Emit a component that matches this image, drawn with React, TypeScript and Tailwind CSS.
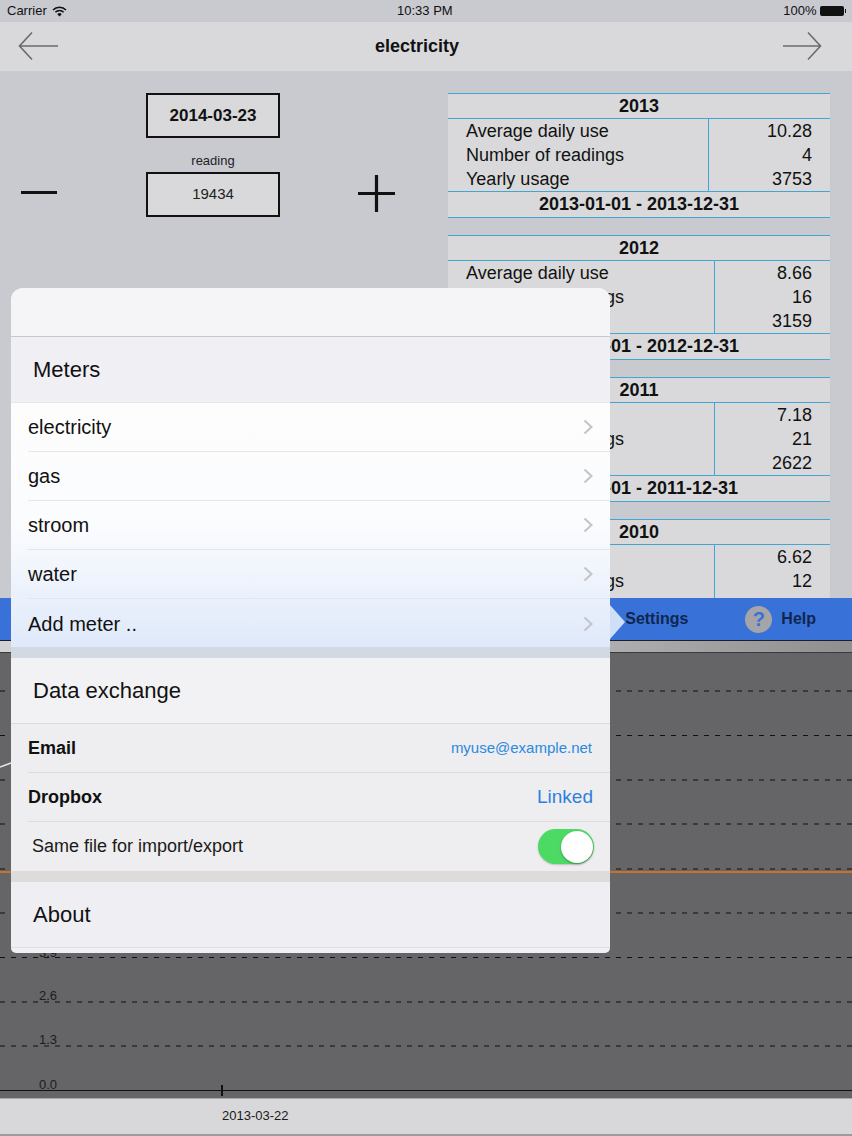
import React from "react";

const gridYs = [692, 736.5, 781, 825, 870, 914, 958.5, 1003, 1047];

function StatsTable({ year, range, divider, rows }: { year: string; range: string; divider: string; rows: [string, string][] }) {
  return (
    <div className="shrink-0 bg-[#d9d9db] text-[18px] leading-[24px] text-[#111] border-t border-b border-[#45a5d2]">
      <div className="h-[25px] text-center font-bold border-b border-[#45a5d2]">{year}</div>
      <div className="flex h-[73px] border-b border-[#45a5d2]">
        <div className={`${divider} shrink-0 pl-[18px] border-r border-[#45a5d2]`}>
          {rows.map((r) => (
            <div key={r[0]} className="whitespace-nowrap">{r[0]}</div>
          ))}
        </div>
        <div className="flex-1 pr-[18px] text-right">
          {rows.map((r) => (
            <div key={r[0]}>{r[1]}</div>
          ))}
        </div>
      </div>
      <div className="h-[25px] text-center font-bold">{range}</div>
    </div>
  );
}

function Chevron() {
  return (
    <svg width="11" height="16" viewBox="0 0 11 16" className="shrink-0">
      <path d="M1.5 1.5 L8.5 8 L1.5 14.5" fill="none" stroke="#c4c4c8" strokeWidth="2" />
    </svg>
  );
}

function MeterRow({ label, last }: { label: string; last?: boolean }) {
  return (
    <div className="h-[49px] pl-[17px]">
      <div className={`h-full flex items-center justify-between pr-[16px] ${last ? "" : "border-b border-[#e4e6ea]"}`}>
        <span className="text-[20px] text-[#111]">{label}</span>
        <Chevron />
      </div>
    </div>
  );
}

export default function App() {
  return (
    <div className="relative w-[852px] h-[1136px] overflow-hidden bg-[#c9c9d0] font-['Liberation_Sans',Arial,sans-serif] flex flex-col">
      {/* Status bar */}
      <div className="relative h-[22px] shrink-0 flex items-center justify-between pl-[7px] pr-[6px] text-[13px] text-[#111]">
        <div className="flex items-center gap-[5px]">
          <span>Carrier</span>
          <svg width="15" height="11" viewBox="0 0 15 11">
            <path d="M1 4 A9 9 0 0 1 14 4" fill="none" stroke="#111" strokeWidth="1.6" />
            <path d="M3.4 6.3 A5.6 5.6 0 0 1 11.6 6.3" fill="none" stroke="#111" strokeWidth="1.6" />
            <path d="M5.3 8.2 A3 3 0 0 1 9.7 8.2 L7.5 10.6 Z" fill="#111" />
          </svg>
        </div>
        <span className="absolute left-[397px] font-medium">10:33 PM</span>
        <div className="flex items-center gap-[3px]">
          <span>100%</span>
          <div className="w-[24px] h-[10px] bg-[#111] rounded-[2px]" />
          <div className="w-[1.5px] h-[4px] bg-[#111] -ml-[2px]" />
        </div>
      </div>

      {/* Nav bar */}
      <div className="h-[49px] shrink-0 bg-[#d9d9db] flex items-center justify-between pl-[18px] pr-[30px]">
        <svg width="42" height="30" viewBox="0 0 42 30" className="-mt-[2px]">
          <path d="M14 1.5 L1.5 15 L14 28.5 M1.5 15 H40" fill="none" stroke="#6b6b6b" strokeWidth="1.6" />
        </svg>
        <span className="text-[18px] font-bold text-[#111] -ml-[8px]">electricity</span>
        <svg width="40" height="30" viewBox="0 0 40 30" className="-mt-[2px]">
          <path d="M26 1.5 L38.5 15 L26 28.5 M38.5 15 H1" fill="none" stroke="#6b6b6b" strokeWidth="1.6" />
        </svg>
      </div>

      {/* Main content */}
      <div className="h-[527px] shrink-0 flex">
        <div className="w-[448px] shrink-0 flex items-start">
          <div className="w-[21px] shrink-0" />
          <div className="w-[36px] h-[3px] bg-[#111] mt-[120px] shrink-0" />
          <div className="w-[89px] shrink-0" />
          <div className="w-[134px] shrink-0 flex flex-col items-center mt-[22px]">
            <div className="w-full h-[45px] border-2 border-[#111] bg-[#d9d9db] flex items-center justify-center text-[17px] font-bold text-[#111]">
              2014-03-23
            </div>
            <div className="h-[34px] pt-[15px] text-[13px] leading-[16px] text-[#222]">reading</div>
            <div className="w-full h-[45px] border-2 border-[#111] bg-[#d9d9db] flex items-center justify-center text-[15px] text-[#222]">
              19434
            </div>
          </div>
          <div className="w-[78px] shrink-0" />
          <svg width="37" height="37" viewBox="0 0 37 37" className="mt-[104px] shrink-0">
            <path d="M18.5 0 V37 M0 18.5 H37" stroke="#111" strokeWidth="3.2" />
          </svg>
        </div>
        <div className="w-[382px] shrink-0 h-[505px] mt-[22px] overflow-hidden flex flex-col gap-[17px]">
          <StatsTable year="2013" range="2013-01-01 - 2013-12-31" divider="w-[261px]" rows={[["Average daily use", "10.28"], ["Number of readings", "4"], ["Yearly usage", "3753"]]} />
          <StatsTable year="2012" range="2012-01-01 - 2012-12-31" divider="w-[267px]" rows={[["Average daily use", "8.66"], ["Number of readings", "16"], ["Yearly usage", "3159"]]} />
          <StatsTable year="2011" range="2011-01-01 - 2011-12-31" divider="w-[267px]" rows={[["Average daily use", "7.18"], ["Number of readings", "21"], ["Yearly usage", "2622"]]} />
          <StatsTable year="2010" range="2010-01-01 - 2010-12-31" divider="w-[267px]" rows={[["Average daily use", "6.62"], ["Number of readings", "12"], ["Yearly usage", "2400"]]} />
        </div>
      </div>

      {/* Tab bar */}
      <div className="h-[43px] shrink-0 bg-[#3872d8] border-b border-[#1a1f2a] flex items-center justify-end pr-[36px] text-[16px] font-bold text-[#10264f]">
        <span>Settings</span>
        <div className="w-[27px] h-[27px] rounded-full bg-[#a5a5a8] ml-[57px] flex items-center justify-center text-[20px] text-[#3872d8]">?</div>
        <span className="ml-[9px]">Help</span>
      </div>
      <div className="h-[12px] shrink-0 bg-gradient-to-r from-[#d2d2d4] via-[#c6c6c8] to-[#8f8f90] border-b border-[#3a3a3c]" />

      {/* Chart */}
      <div className="relative flex-1 bg-[#656567]">
        <svg width="852" height="444" viewBox="0 654 852 444" className="block">
          {gridYs.map((y) => (
            <line key={y} x1="0" x2="852" y1={y} y2={y} stroke="#111" strokeWidth="1" strokeDasharray="5 6" />
          ))}
          <line x1="0" x2="852" y1="873" y2="873" stroke="#c8712d" strokeWidth="2" />
          <path d="M0 768 L11 764" fill="none" stroke="#e6e6e6" strokeWidth="1.5" />
          <line x1="0" x2="852" y1="1091.5" y2="1091.5" stroke="#111" strokeWidth="1.2" />
          <line x1="222" x2="222" y1="1086" y2="1097" stroke="#111" strokeWidth="2" />
          <text x="39" y="958" fontSize="13" fill="#1c1c1c">3.9</text>
          <text x="39" y="1001" fontSize="13" fill="#1c1c1c">2.6</text>
          <text x="39" y="1045" fontSize="13" fill="#1c1c1c">1.3</text>
          <text x="39" y="1090" fontSize="13" fill="#1c1c1c">0.0</text>
        </svg>
      </div>

      {/* Bottom axis strip */}
      <div className="h-[38px] shrink-0 bg-[#d8d8da] border-t border-[#a8a8aa] border-b-2 border-b-[#9c9c9e] pl-[222px] pt-[9px] text-[13px] leading-[16px] text-[#1a1a1a]">
        2013-03-22
      </div>

      {/* Popover */}
      <div className="absolute left-[11px] top-[288px] w-[599px] h-[665px] rounded-[12px] bg-[#efeff4] flex flex-col">
        <div className="h-[49px] shrink-0 rounded-t-[12px] bg-[#f5f5f8] border-b border-[#c9c9cc]" />
        <div className="h-[66px] shrink-0 bg-[#efeff4] flex items-center pl-[22px] text-[22px] text-[#111] border-b border-[#e7e7ec]">Meters</div>
        <div className="h-[244px] shrink-0 bg-gradient-to-b from-[#fdfdfd] via-[#fbfcfe] to-[#dfe9fa]">
          <MeterRow label="electricity" />
          <MeterRow label="gas" />
          <MeterRow label="stroom" />
          <MeterRow label="water" />
          <MeterRow label="Add meter .." last />
        </div>
        <div className="h-[11px] shrink-0 bg-[#d3d9e2]" />
        <div className="h-[66px] shrink-0 bg-[#f2f1f3] flex items-center pl-[22px] text-[22px] text-[#111] border-b border-[#dcdcde]">Data exchange</div>
        <div className="bg-[#eeedef] shrink-0">
          <div className="h-[49px] pl-[17px]">
            <div className="h-full flex items-center justify-between pr-[18px] border-b border-[#dcdcde]">
              <span className="text-[18px] font-bold text-[#111]">Email</span>
              <span className="text-[15px] text-[#2a8ae0]">myuse@example.net</span>
            </div>
          </div>
          <div className="h-[49px] pl-[17px]">
            <div className="h-full flex items-center justify-between pr-[17px] border-b border-[#dcdcde]">
              <span className="text-[18px] font-bold text-[#111]">Dropbox</span>
              <span className="text-[19px] text-[#2f80dc]">Linked</span>
            </div>
          </div>
          <div className="h-[49px] pl-[21px] pr-[16px] flex items-center justify-between">
            <span className="text-[18px] text-[#1a1a1a]">Same file for import/export</span>
            <div className="w-[56px] h-[35px] rounded-full bg-[#4cd964] flex items-center justify-end pr-[1px] shadow-[0_1px_2px_rgba(0,0,0,0.2)]">
              <div className="w-[32px] h-[32px] rounded-full bg-white shadow-[0_1px_2px_rgba(0,0,0,0.35)]" />
            </div>
          </div>
        </div>
        <div className="h-[11px] shrink-0 bg-[#dddcdb]" />
        <div className="h-[66px] shrink-0 bg-[#efeff3] flex items-center pl-[22px] text-[22px] text-[#111] border-b border-[#dfdfe3]">About</div>
        <div className="flex-1 rounded-b-[12px] bg-[#f1f1f5]" />
        {/* Arrow */}
        <svg width="15" height="34" viewBox="0 0 15 34" className="absolute left-[599px] top-[317px]">
          <path d="M0 0 L15 17 L0 34 Z" fill="#cfdff8" />
        </svg>
      </div>
    </div>
  );
}
